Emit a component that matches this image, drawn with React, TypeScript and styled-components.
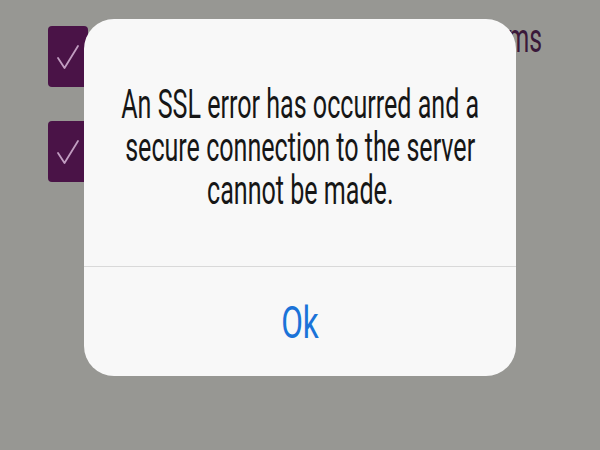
import styled, { createGlobalStyle } from "styled-components";

const GlobalStyle = createGlobalStyle`
  html, body {
    margin: 0;
    padding: 0;
    background: #979793;
  }
  body {
    font-family: Roboto, "Liberation Sans", sans-serif;
  }
`;

const Screen = styled.div`
  position: relative;
  width: 600px;
  height: 450px;
  overflow: hidden;
  background: #979793;
`;

const Form = styled.div`
  display: flex;
  flex-direction: column;
  gap: 34px;
  padding: 26px 58px 0 48px;
`;

const Row = styled.div`
  display: flex;
  align-items: center;
  gap: 16px;
  height: 61px;
`;

const Box = styled.div`
  flex: none;
  width: 40px;
  height: 61px;
  border-radius: 4px;
  background: #4a1347;
  display: flex;
  align-items: center;
  justify-content: center;
`;

const Label = styled.span<{ $align: "left" | "right" }>`
  flex: 1;
  margin-top: -36px;
  text-align: ${(p) => p.$align};
  font-size: 40px;
  color: #3a183a;
  white-space: nowrap;
  overflow: hidden;
  transform: scaleX(0.62);
  transform-origin: ${(p) => p.$align} center;
`;

const Overlay = styled.div`
  position: absolute;
  left: 84px;
  top: 19px;
  width: 432px;
  height: 357px;
  border-radius: 30px;
  background: #f8f8f8;
  display: flex;
  flex-direction: column;
  overflow: hidden;
`;

const Message = styled.div`
  height: 248px;
  display: flex;
  flex-direction: column;
  align-items: center;
  padding-top: 64px;
  box-sizing: border-box;
  border-bottom: 1px solid #d9d9d9;
`;

const Line = styled.div`
  font-size: 38px;
  line-height: 43px;
  color: #161616;
  white-space: nowrap;
  transform: scale(0.66, 1.05);
`;

const Action = styled.button`
  flex: 1;
  border: none;
  background: transparent;
  font-family: inherit;
  font-size: 45px;
  color: #1b73d8;
  padding: 2px 0 0;
  transform: scaleX(0.7);
`;

const Check = () => (
  <svg width="24" height="26" viewBox="0 0 24 26" fill="none">
    <path d="M2 14 L8.5 24 L22 2" stroke="#c19dc1" strokeWidth="1.8" strokeLinecap="round" strokeLinejoin="round" />
  </svg>
);

export default function App() {
  return (
    <>
      <GlobalStyle />
      <Screen>
        <Form>
          <Row>
            <Box>
              <Check />
            </Box>
            <Label $align="right">I agree to the Terms</Label>
          </Row>
          <Row>
            <Box>
              <Check />
            </Box>
            <Label $align="left">Send me updates</Label>
          </Row>
        </Form>
        <Overlay>
          <Message>
            <Line>An SSL error has occurred and a</Line>
            <Line>secure connection to the server</Line>
            <Line>cannot be made.</Line>
          </Message>
          <Action>Ok</Action>
        </Overlay>
      </Screen>
    </>
  );
}
